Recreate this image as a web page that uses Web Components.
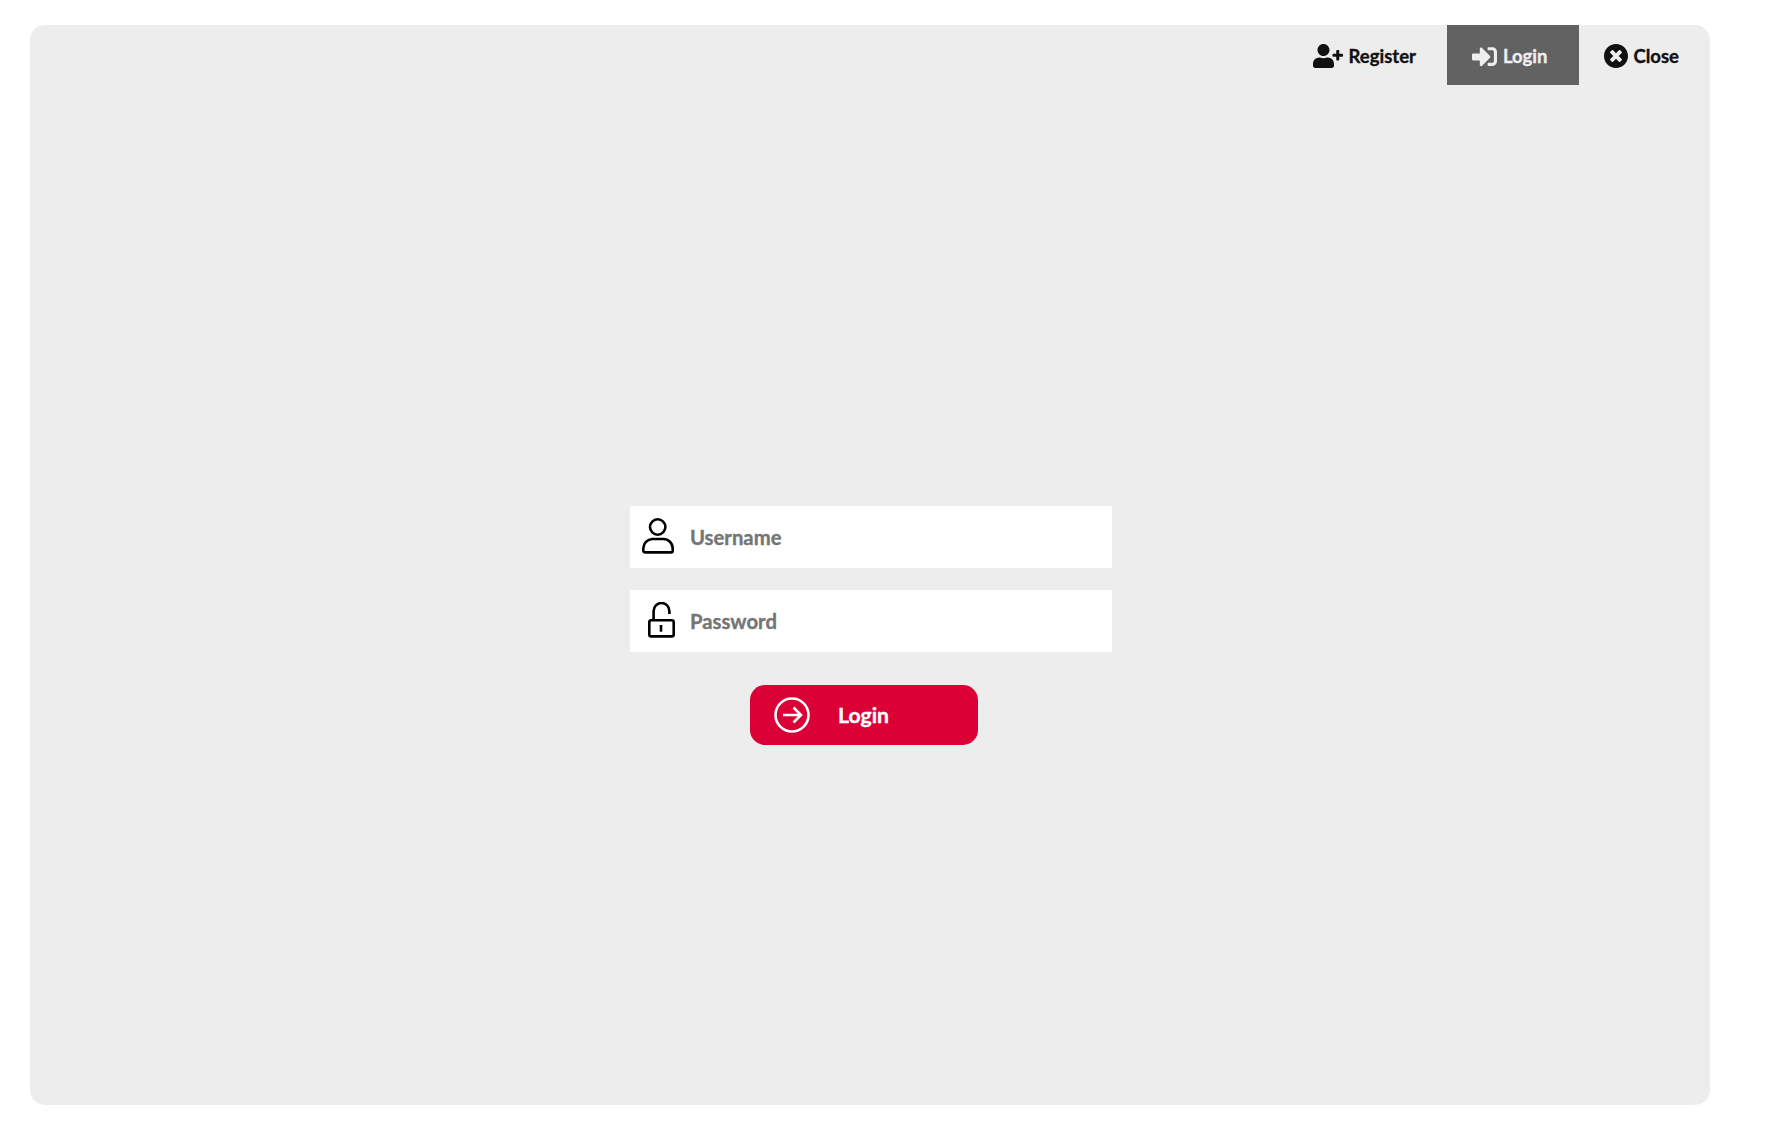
<!DOCTYPE html>
<html lang="en">
<head>
<meta charset="utf-8">
<title>Login</title>
<style>
  html, body { margin: 0; background: #fff; }
  body { padding: 25px 0 0 30px; font-family: Lato, "Noto Sans", sans-serif; font-weight: 700; -webkit-text-stroke: 0.35px currentColor; }
</style>
</head>
<body>
<login-panel>
  <nav-tab slot="nav" icon="register">Register</nav-tab>
  <nav-tab slot="nav" icon="login" active>Login</nav-tab>
  <nav-tab slot="nav" icon="close">Close</nav-tab>
  <text-field icon="user">Username</text-field>
  <text-field icon="lock">Password</text-field>
  <submit-button>Login</submit-button>
</login-panel>

<script>
const NAV_ICONS = {
  register: `<svg viewBox="0 0 640 512" width="30" height="24"><path fill="currentColor" d="M624 208h-64v-64c0-8.800-7.200-16-16-16h-32c-8.800 0-16 7.200-16 16v64h-64c-8.800 0-16 7.200-16 16v32c0 8.800 7.200 16 16 16h64v64c0 8.800 7.200 16 16 16h32c8.800 0 16-7.200 16-16v-64h64c8.800 0 16-7.200 16-16v-32c0-8.800-7.200-16-16-16zm-400 48c70.700 0 128-57.300 128-128S294.700 0 224 0 96 57.300 96 128s57.300 128 128 128zm89.600 32h-16.700c-22.200 10.200-46.900 16-72.900 16s-50.600-5.800-72.900-16h-16.700C60.200 288 0 348.200 0 422.400V464c0 26.500 21.500 48 48 48h352c26.500 0 48-21.500 48-48v-41.600c0-74.200-60.200-134.400-134.400-134.400z"/></svg>`,
  login: `<svg viewBox="0 0 512 512" width="25" height="25"><path fill="currentColor" d="M416 448h-84c-6.600 0-12-5.400-12-12v-40c0-6.600 5.400-12 12-12h84c17.700 0 32-14.300 32-32V160c0-17.700-14.300-32-32-32h-84c-6.600 0-12-5.400-12-12V76c0-6.600 5.400-12 12-12h84c53 0 96 43 96 96v192c0 53-43 96-96 96zm-47-201L201 79c-15-15-41-4.500-41 17v96H24c-13.300 0-24 10.700-24 24v96c0 13.300 10.700 24 24 24h136v96c0 21.500 26 32 41 17l168-168c9.300-9.400 9.300-24.600 0-34z"/></svg>`,
  close: `<svg viewBox="8 8 496 496" width="24" height="24"><path fill="currentColor" d="M256 8C119 8 8 119 8 256s111 248 248 248 248-111 248-248S393 8 256 8zm121.600 313.100c4.700 4.700 4.700 12.300 0 17L338 377.600c-4.700 4.700-12.300 4.700-17 0L256 312l-65.100 65.600c-4.700 4.700-12.300 4.700-17 0L134.400 338c-4.700-4.700-4.700-12.300 0-17l65.600-65-65.600-65.100c-4.700-4.700-4.700-12.300 0-17l39.600-39.600c4.700-4.700 12.300-4.700 17 0l65 65.700 65.100-65.600c4.700-4.700 12.300-4.700 17 0l39.600 39.600c4.700 4.700 4.700 12.300 0 17L312 256l65.600 65.100z"/></svg>`
};

const FIELD_ICONS = {
  user: `<svg viewBox="0 0 34 38" width="34" height="38" fill="none" stroke="currentColor" stroke-width="2.600"><circle cx="16.700" cy="9" r="7.700"/><path d="M11.300 21h11a9.400 9.400 0 0 1 9.400 9.400v2.300a1.700 1.700 0 0 1-1.700 1.700H4a1.700 1.700 0 0 1-1.700-1.700v-2.300a9.400 9.400 0 0 1 9-9.400z"/></svg>`,
  lock: `<svg viewBox="0 0 34 38" width="34" height="38" fill="none" stroke="currentColor" stroke-width="2.600"><path d="M12.600 18.300V8.900a7.900 7.900 0 0 1 15.800 0V12"/><rect x="8.300" y="18.300" width="24.400" height="16.100" rx="2"/><path d="M20 23v6.700"/></svg>`
};

class LoginPanel extends HTMLElement {
  constructor() {
    super();
    this.attachShadow({ mode: "open" });
    this.shadowRoot.innerHTML = `
    <style>
      :host {
        display: block;
        width: 1680px;
        height: 1080px;
        background: #ededed;
        border-radius: 15px;
        overflow: hidden;
      }
      nav {
        display: flex;
        justify-content: flex-end;
        height: 60px;
      }
      .form {
        display: flex;
        flex-direction: column;
        gap: 22px;
        width: 482px;
        margin: 421px 0 0 600px;
      }
    </style>
    <nav><slot name="nav"></slot></nav>
    <div class="form"><slot></slot></div>`;
  }
}

class NavTab extends HTMLElement {
  constructor() {
    super();
    this.attachShadow({ mode: "open" });
  }

  connectedCallback() {
    this.shadowRoot.innerHTML = `
    <style>
      :host {
        display: flex;
        align-items: center;
        gap: 6px;
        height: 60px;
        box-sizing: border-box;
        padding: 2px 31px 0 25px;
        color: #111;
        font-size: 18.500px;
      }
      :host([active]) {
        background: #626262;
        color: #eee;
      }
      svg { display: block; }
    </style>
    ${NAV_ICONS[this.getAttribute("icon")]}
    <slot></slot>`;
  }
}

class TextField extends HTMLElement {
  constructor() {
    super();
    this.attachShadow({ mode: "open" });
  }

  connectedCallback() {
    this.shadowRoot.innerHTML = `
    <style>
      :host {
        display: flex;
        align-items: center;
        gap: 15px;
        height: 62px;
        padding-left: 11px;
        background: #fff;
        color: #757575;
        font-size: 20.300px;
      }
      .icon { display: block; color: #000; -webkit-text-stroke: 0; }
      svg { display: block; }
      slot { display: block; margin-top: -1px; }
    </style>
    <span class="icon">${FIELD_ICONS[this.getAttribute("icon")]}</span>
    <slot></slot>`;
  }
}

class SubmitButton extends HTMLElement {
  constructor() {
    super();
    this.attachShadow({ mode: "open" });
    this.shadowRoot.innerHTML = `
    <style>
      :host {
        display: flex;
        align-items: center;
        align-self: flex-start;
        width: 228px;
        height: 60px;
        margin: 11px 0 0 120px;
        padding-left: 24px;
        box-sizing: border-box;
        background: #db0036;
        border-radius: 15px;
        color: #fff;
        font-size: 21.200px;
      }
      svg { display: block; margin-right: 28px; }
      slot { display: block; margin-top: -1px; }
    </style>
    <svg viewBox="0 0 36 36" width="36" height="36" fill="none" stroke="currentColor" stroke-width="2.600">
      <circle cx="18" cy="18" r="16.500"/>
      <path d="M9 18h18M19.500 10.500L27 18l-7.500 7.500"/>
    </svg>
    <slot></slot>`;
  }
}

customElements.define("login-panel", LoginPanel);
customElements.define("nav-tab", NavTab);
customElements.define("text-field", TextField);
customElements.define("submit-button", SubmitButton);
</script>
</body>
</html>
